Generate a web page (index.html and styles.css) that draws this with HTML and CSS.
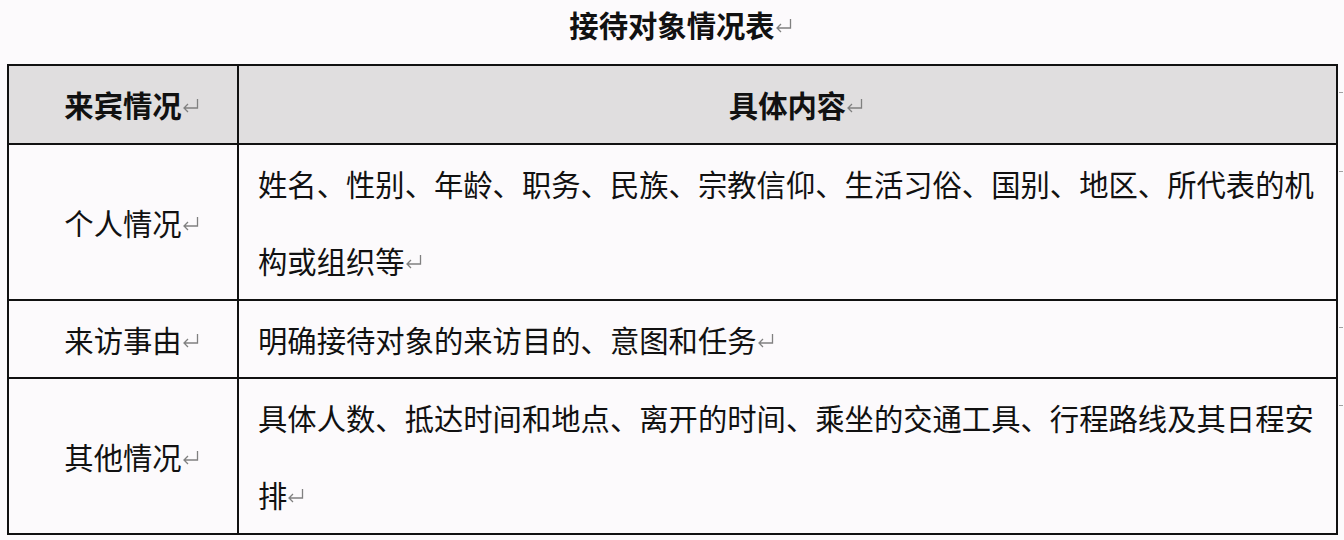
FILE: index.html
```html
<!DOCTYPE html>
<html lang="zh-CN">
<head>
<meta charset="utf-8">
<title>接待对象情况表</title>
<link rel="stylesheet" href="styles.css">
</head>
<body>
<h1 class="title">接待对象情况表<svg class="pm" viewBox="0 0 17 15"><path d="M15.5 1V10H2M6 6L2 10L6 14"/></svg></h1>
<table class="grid">
  <colgroup><col class="c1"><col class="c2"></colgroup>
  <tr class="head">
    <th>来宾情况<svg class="pm" viewBox="0 0 17 15"><path d="M15.5 1V10H2M6 6L2 10L6 14"/></svg></th>
    <th class="wide">具体内容<svg class="pm" viewBox="0 0 17 15"><path d="M15.5 1V10H2M6 6L2 10L6 14"/></svg></th>
  </tr>
  <tr>
    <td class="label">个人情况<svg class="pm" viewBox="0 0 17 15"><path d="M15.5 1V10H2M6 6L2 10L6 14"/></svg></td>
    <td class="text">姓名、性别、年龄、职务、民族、宗教信仰、生活习俗、国别、地区、所代表的机构或组织等<svg class="pm" viewBox="0 0 17 15"><path d="M15.5 1V10H2M6 6L2 10L6 14"/></svg></td>
  </tr>
  <tr class="short">
    <td class="label">来访事由<svg class="pm" viewBox="0 0 17 15"><path d="M15.5 1V10H2M6 6L2 10L6 14"/></svg></td>
    <td class="text">明确接待对象的来访目的、意图和任务<svg class="pm" viewBox="0 0 17 15"><path d="M15.5 1V10H2M6 6L2 10L6 14"/></svg></td>
  </tr>
  <tr>
    <td class="label">其他情况<svg class="pm" viewBox="0 0 17 15"><path d="M15.5 1V10H2M6 6L2 10L6 14"/></svg></td>
    <td class="text">具体人数、抵达时间和地点、离开的时间、乘坐的交通工具、行程路线及其日程安排<svg class="pm" viewBox="0 0 17 15"><path d="M15.5 1V10H2M6 6L2 10L6 14"/></svg></td>
  </tr>
</table>
</body>
</html>
```

FILE: styles.css
```css
html, body {
  margin: 0;
  padding: 0;
  background: #fcfafc;
}
body {
  font-family: "Noto Sans CJK SC", "Noto Sans", sans-serif;
  color: #111;
  font-size: 29.33px;
}
.title {
  margin: 0;
  padding: 0 0 16px;
  height: 48px;
  line-height: 48px;
  font-size: 29.33px;
  font-weight: 700;
  text-align: center;
}
.pm {
  width: 17px;
  height: 15px;
  margin-right: -17px;
  vertical-align: 4px;
  fill: none;
  stroke: #808080;
  stroke-width: 1.3;
}
.grid {
  margin-left: 7px;
  width: 1331px;
  border-collapse: collapse;
  table-layout: fixed;
}
.c1 { width: 230px; }
.grid th, .grid td {
  border: 2px solid #111;
  padding: 0;
  line-height: 77px;
  position: relative;
}
.grid th {
  background: #e0dedf;
  font-weight: 700;
  text-align: center;
}
.grid td.label {
  text-align: center;
}
.grid td.text {
  padding: 0 20px 0 19px;
  text-align: left;
}
.grid tr.short td { line-height: 76px; }
.grid th.wide::after,
.grid td.text::after {
  content: "";
  position: absolute;
  right: -7px;
  top: 26px;
  width: 4px;
  height: 1px;
  background: #a0a0a0;
}
```
